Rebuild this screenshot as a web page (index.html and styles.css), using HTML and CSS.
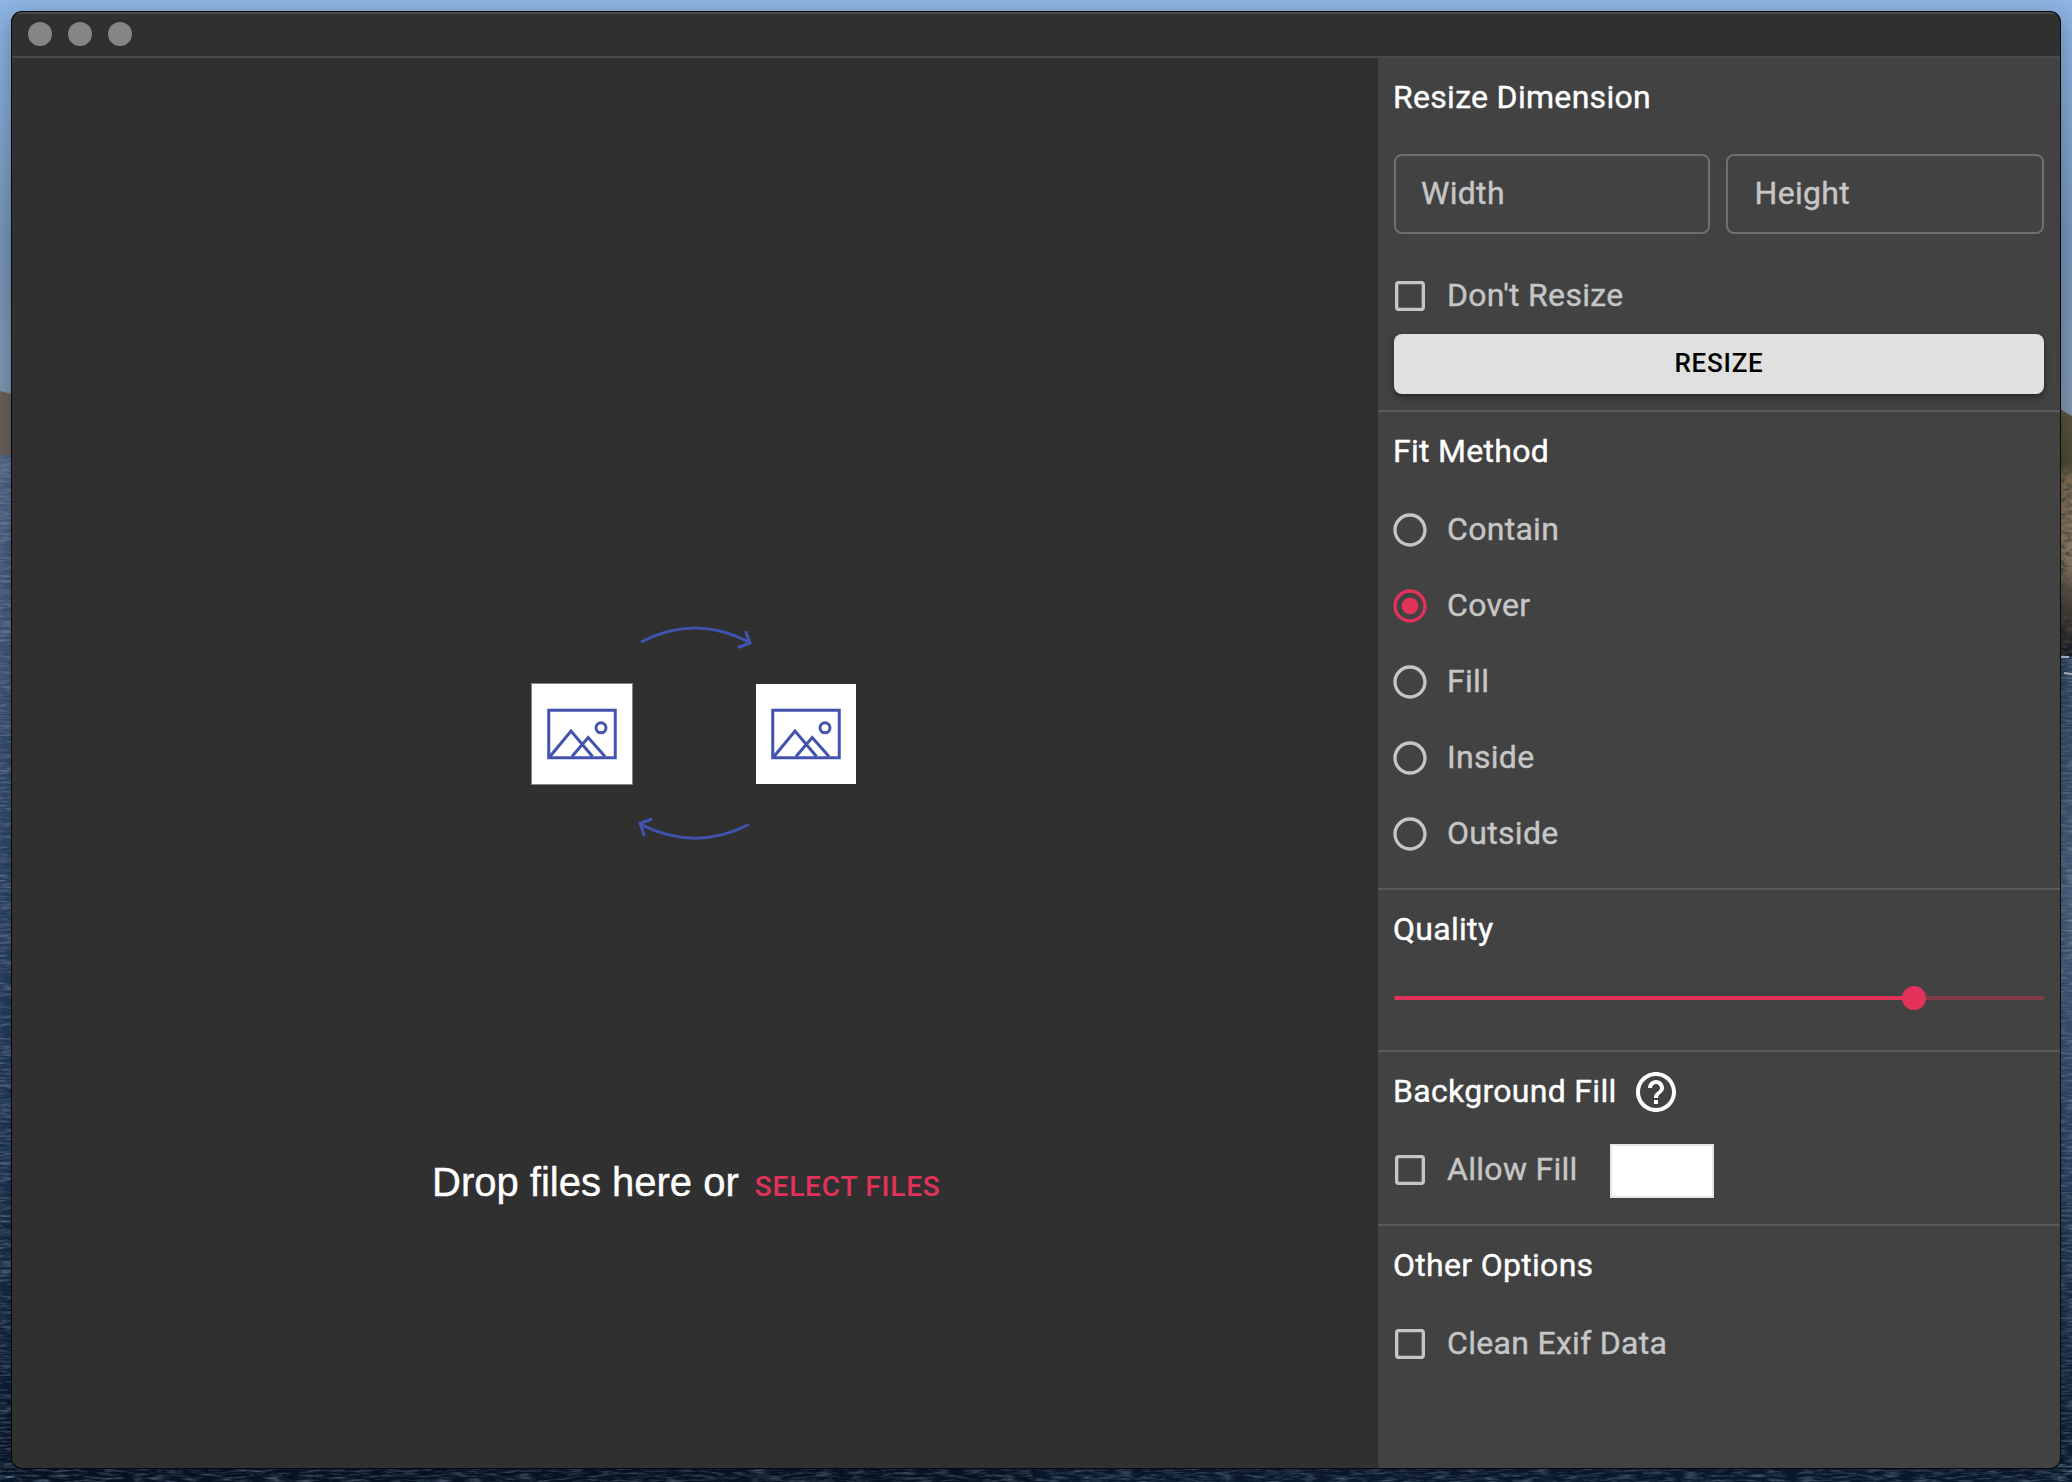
FILE: index.html
```html
<!DOCTYPE html>
<html lang="en">
<head>
<meta charset="utf-8">
<title>Image Resizer</title>
<link rel="stylesheet" href="styles.css">
</head>
<body>
<svg class="wallpaper" viewBox="0 0 2072 1482" aria-hidden="true">
  <defs>
    <linearGradient id="sky" x1="0" y1="0" x2="0" y2="1">
      <stop offset="0" stop-color="#8db4e2"/><stop offset=".06" stop-color="#88afdc"/><stop offset=".4" stop-color="#7594b8"/><stop offset="1" stop-color="#8b99a6"/>
    </linearGradient>
    <linearGradient id="sea" x1="0" y1="0" x2="0" y2="1">
      <stop offset="0" stop-color="#4f6484"/><stop offset=".35" stop-color="#30466a"/><stop offset=".7" stop-color="#1c3350"/><stop offset="1" stop-color="#061527"/>
    </linearGradient>
    <linearGradient id="searight" x1="0" y1="0" x2="0" y2="1">
      <stop offset="0" stop-color="#2c405b"/><stop offset=".3" stop-color="#465c77"/><stop offset=".6" stop-color="#2b415e"/><stop offset="1" stop-color="#0a1b2f"/>
    </linearGradient>
    <linearGradient id="cliff" x1="0" y1="0" x2="0" y2="1">
      <stop offset="0" stop-color="#5a5441"/><stop offset=".22" stop-color="#4b4a31"/><stop offset=".28" stop-color="#7d6a53"/><stop offset=".6" stop-color="#8b7c69"/><stop offset=".8" stop-color="#443c35"/><stop offset="1" stop-color="#171d28"/>
    </linearGradient>
    <filter id="ripple" x="0" y="0" width="1" height="1">
      <feTurbulence type="fractalNoise" baseFrequency=".06 .4" numOctaves="3" seed="4"/>
      <feColorMatrix values="0 0 0 0 .35  0 0 0 0 .45  0 0 0 0 .58  1 0 0 0 -.42"/>
    </filter>
    <filter id="rock" x="0" y="0" width="1" height="1">
      <feTurbulence type="fractalNoise" baseFrequency=".15 .25" numOctaves="3" seed="9"/>
      <feColorMatrix values="0 0 0 0 .08  0 0 0 0 .07  0 0 0 0 .05  2.4 0 0 0 -1"/>
    </filter>
  </defs>
  <rect width="2072" height="600" fill="url(#sky)"/>
  <path d="M0 391L12 394V456H0Z" fill="#6a605c"/>
  <rect y="455" width="1036" height="1027" fill="url(#sea)"/>
  <path d="M2058 408L2072 416V658H2058Z" fill="url(#cliff)"/>
  <rect x="2058" y="416" width="14" height="240" filter="url(#rock)"/>
  <rect x="1036" y="656" width="1036" height="826" fill="url(#searight)"/>
  <rect y="455" width="14" height="1027" filter="url(#ripple)"/>
  <rect x="2058" y="656" width="14" height="826" filter="url(#ripple)"/>
  <rect y="1466" width="2072" height="16" filter="url(#ripple)"/>
  <path d="M2060 657h9M2064 673l8 1" stroke="#b3bac2" stroke-width="2"/>
</svg>

<div class="window">
  <header class="titlebar"><i class="light"></i><i class="light"></i><i class="light"></i></header>
  <div class="content">
    <main class="drop">
      <svg class="illustration" width="330" height="220" viewBox="530 622 330 220" fill="none" stroke="#4153af" stroke-width="3">
        <rect x="531.5" y="683.5" width="101" height="101" fill="#fff" stroke="#858585" stroke-width="1"/>
        <rect x="756" y="684" width="100" height="100" fill="#fff" stroke="none"/>
        <g id="picture">
          <rect x="548.75" y="710.25" width="66.5" height="47.5"/>
          <path d="M550 756.5L571 731L592.500 756.500M572 756.500L588.200 737.500L605 756.500"/>
          <circle cx="601" cy="727.800" r="5"/>
        </g>
        <use href="#picture" x="224"/>
        <path d="M641 642Q695 614 749 642M745.500 631L750 643L738 647.500"/>
        <path d="M749 824.500Q695 852 641 824.500M652 819L640 823.500L644.500 836"/>
      </svg>
      <p class="prompt">Drop files here or <button class="select">SELECT FILES</button></p>
    </main>
    <aside class="panel">
      <section class="section">
        <h2>Resize Dimension</h2>
        <div class="fields"><div class="field">Width</div><div class="field wide">Height</div></div>
        <label class="option short"><svg class="icon" viewBox="0 0 24 24"><path d="M19 5v14H5V5h14m0-2H5c-1.1 0-2 .9-2 2v14c0 1.100.9 2 2 2h14c1.100 0 2-.9 2-2V5c0-1.100-.9-2-2-2z"/></svg><span>Don't Resize</span></label>
        <button class="resize">RESIZE</button>
      </section>
      <section class="section">
        <h2>Fit Method</h2>
        <div class="options">
          <label class="option"><svg class="icon" viewBox="0 0 24 24"><path d="M12 2C6.480 2 2 6.480 2 12s4.480 10 10 10 10-4.480 10-10S17.520 2 12 2zm0 18c-4.420 0-8-3.580-8-8s3.580-8 8-8 8 3.580 8 8-3.580 8-8 8z"/></svg><span>Contain</span></label>
          <label class="option"><svg class="icon on" viewBox="0 0 24 24"><path d="M12 2C6.480 2 2 6.480 2 12s4.480 10 10 10 10-4.480 10-10S17.520 2 12 2zm0 18c-4.420 0-8-3.580-8-8s3.580-8 8-8 8 3.580 8 8-3.580 8-8 8z"/><circle cx="12" cy="12" r="5"/></svg><span>Cover</span></label>
          <label class="option"><svg class="icon" viewBox="0 0 24 24"><path d="M12 2C6.480 2 2 6.480 2 12s4.480 10 10 10 10-4.480 10-10S17.520 2 12 2zm0 18c-4.420 0-8-3.580-8-8s3.580-8 8-8 8 3.580 8 8-3.580 8-8 8z"/></svg><span>Fill</span></label>
          <label class="option"><svg class="icon" viewBox="0 0 24 24"><path d="M12 2C6.480 2 2 6.480 2 12s4.480 10 10 10 10-4.480 10-10S17.520 2 12 2zm0 18c-4.420 0-8-3.580-8-8s3.580-8 8-8 8 3.580 8 8-3.580 8-8 8z"/></svg><span>Inside</span></label>
          <label class="option"><svg class="icon" viewBox="0 0 24 24"><path d="M12 2C6.480 2 2 6.480 2 12s4.480 10 10 10 10-4.480 10-10S17.520 2 12 2zm0 18c-4.420 0-8-3.580-8-8s3.580-8 8-8 8 3.580 8 8-3.580 8-8 8z"/></svg><span>Outside</span></label>
        </div>
      </section>
      <section class="section quality">
        <h2>Quality</h2>
        <div class="slider"><span class="track" style="width:80%"></span><span class="thumb"></span><span class="rail"></span></div>
      </section>
      <section class="section">
        <h2>Background Fill<svg class="help" viewBox="0 0 24 24"><path d="M11 18h2v-2h-2v2zm1-16C6.480 2 2 6.480 2 12s4.480 10 10 10 10-4.480 10-10S17.520 2 12 2zm0 18c-4.410 0-8-3.590-8-8s3.590-8 8-8 8 3.590 8 8-3.590 8-8 8zm0-14c-2.210 0-4 1.790-4 4h2c0-1.100.9-2 2-2s2 .9 2 2c0 2-3 1.750-3 5h2c0-2.250 3-2.500 3-5 0-2.210-1.790-4-4-4z"/></svg></h2>
        <div class="options fill">
          <label class="option"><svg class="icon" viewBox="0 0 24 24"><path d="M19 5v14H5V5h14m0-2H5c-1.1 0-2 .9-2 2v14c0 1.100.9 2 2 2h14c1.100 0 2-.9 2-2V5c0-1.100-.9-2-2-2z"/></svg><span>Allow Fill</span></label>
          <span class="swatch"></span>
        </div>
      </section>
      <section class="section">
        <h2>Other Options</h2>
        <div class="options">
          <label class="option"><svg class="icon" viewBox="0 0 24 24"><path d="M19 5v14H5V5h14m0-2H5c-1.1 0-2 .9-2 2v14c0 1.100.9 2 2 2h14c1.100 0 2-.9 2-2V5c0-1.100-.9-2-2-2z"/></svg><span>Clean Exif Data</span></label>
        </div>
      </section>
    </aside>
  </div>
</div>
</body>
</html>
```
FILE: styles.css
```css
* { box-sizing: border-box; }

body {
  margin: 0;
  width: 2072px;
  height: 1482px;
  padding: 12px 12px 14px;
  overflow: hidden;
  font-family: Roboto, sans-serif;
  font-size: 32px;
  letter-spacing: .3px;
  color: #fff;
  -webkit-text-stroke: .4px;
}

.wallpaper {
  position: absolute;
  inset: 0;
  width: 2072px;
  height: 1482px;
  z-index: -1;
}

.window {
  display: flex;
  flex-direction: column;
  height: 1456px;
  border-radius: 10px;
  overflow: hidden;
  background: #303030;
  box-shadow: 0 0 0 1px #05080c, 0 6px 22px rgba(0, 0, 0, .3);
}

.titlebar {
  display: flex;
  align-items: center;
  gap: 16px;
  height: 46px;
  padding: 0 16px 2px;
  border-top: 2px solid #484a4b;
  border-bottom: 2px solid #4a4a4a;
}

.light {
  width: 24px;
  height: 24px;
  border-radius: 50%;
  background: #858585;
}

.content { display: flex; flex: 1; }

.drop {
  display: flex;
  flex-direction: column;
  flex: 1;
  padding-top: 564px;
}

.illustration { display: block; margin-left: 518px; }

.prompt {
  display: flex;
  align-items: baseline;
  margin: 316px 0 0 420px;
  font: 40px/48px "Liberation Sans", Arial, sans-serif;
  letter-spacing: 0;
}

.select {
  margin: 0 0 0 16px;
  padding: 0;
  border: 0;
  background: none;
  color: #e3325a;
  font: 500 28px/48px Roboto, sans-serif;
  letter-spacing: .8px;
  -webkit-text-stroke: 0;
}

.panel { width: 682px; background: #424242; }

.section {
  padding: 16px;
  border-bottom: 2px solid #5a5a5a;
}

.section:last-child { border: 0; }

h2 {
  display: flex;
  align-items: center;
  height: 48px;
  margin: 0 0 0 -1px;
  padding-bottom: 2px;
  font-size: 32px;
  font-weight: 400;
  line-height: 46px;
}

.help { width: 48px; height: 48px; margin: 0 0 -2px 15px; fill: #fff; }

.fields { display: flex; gap: 16px; margin-top: 32px; }

.field {
  width: 316px;
  height: 80px;
  padding-left: 25px;
  border: 2px solid #6f6f6f;
  border-radius: 8px;
  line-height: 74px;
  color: #c6c6c6;
}

.field.wide { width: 318px; padding-left: 26.5px; }

.options { margin-top: 16px; }

.option {
  display: flex;
  align-items: center;
  gap: 17px;
  height: 76px;
  margin-left: -4px;
  color: #c6c6c6;
}

.option span { padding-bottom: 2px; }

.option.short { height: 48px; margin-top: 38px; }

.icon { width: 40px; height: 40px; fill: #c6c6c6; }
.icon.on { fill: #e3325a; }

.resize {
  display: block;
  width: 100%;
  height: 60px;
  margin-top: 14px;
  padding: 0 0 2px;
  border: 0;
  border-radius: 8px;
  background: #e0e0e0;
  box-shadow: 0 3px 6px rgba(0, 0, 0, .4);
  color: #000;
  font: 500 26px/58px Roboto, sans-serif;
  letter-spacing: .74px;
  -webkit-text-stroke: 0;
}

.quality { height: 162px; }

.slider {
  display: flex;
  align-items: center;
  height: 24px;
  margin-top: 32px;
}

.track { height: 4px; border-radius: 2px; background: #e3325a; }
.thumb { width: 24px; height: 24px; margin: 0 -12px; border-radius: 50%; background: #e3325a; z-index: 1; }
.rail { flex: 1; height: 4px; border-radius: 2px; background: #823c4b; }

.fill { display: flex; align-items: center; gap: 32px; }

.swatch {
  width: 104px;
  height: 54px;
  margin-top: 2px;
  border: 2px solid #e6e6e6;
  background: #fff;
}
```
